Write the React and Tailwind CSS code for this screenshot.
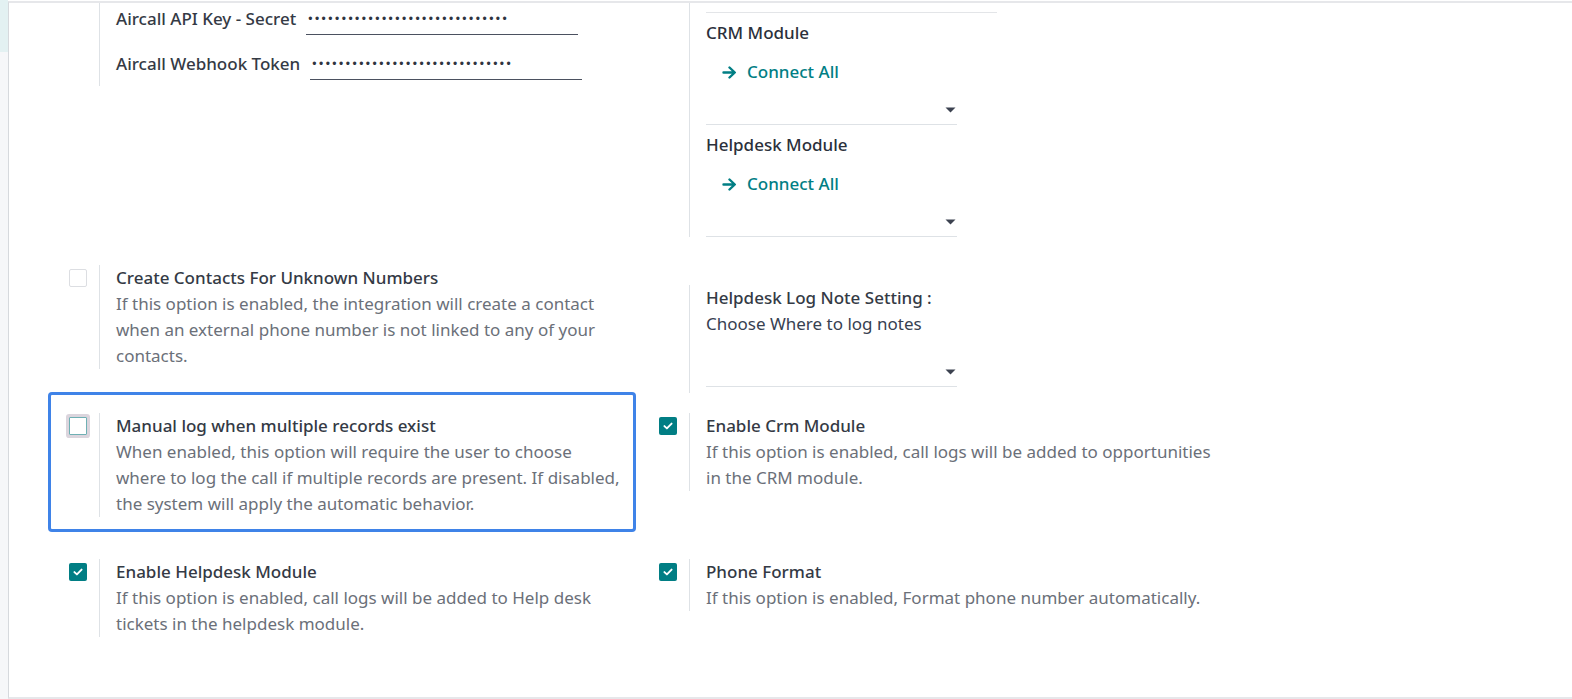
import React from "react";

function Check({ checked, focused }) {
  if (checked) {
    return (
      <div className="w-[18px] h-[18px] bg-[#017e84] rounded-[2px] flex items-center justify-center">
        <svg width="10" height="8" viewBox="0 0 10 8">
          <path d="M1.4 4.1 L3.9 6.4 L8.6 1.6" stroke="white" strokeWidth="1.9" fill="none" strokeLinecap="round" strokeLinejoin="round" />
        </svg>
      </div>
    );
  }
  if (focused) {
    return (
      <div className="w-[18px] h-[18px] bg-white border border-[#6fb0b4] rounded-[1px] shadow-[0_0_0_3px_#dbd5dd]" />
    );
  }
  return <div className="w-[18px] h-[18px] bg-white border border-[#dcdee2] rounded-[2px]" />;
}

function Setting({ checkbox, children }) {
  return (
    <div className="flex">
      <div className="w-[51px] shrink-0 pl-[21px] pt-[4px]">{checkbox}</div>
      <div className="border-l border-[#dee2e6] pl-4 min-w-0">{children}</div>
    </div>
  );
}

function Title({ children }) {
  return <div className="font-medium text-[#343a45] leading-[26px] whitespace-nowrap">{children}</div>;
}

function Desc({ lines }) {
  return (
    <div className="text-[#6b7079] leading-[26px]">
      {lines.map((l, i) => (
        <div key={i} className="whitespace-nowrap">{l}</div>
      ))}
    </div>
  );
}

function Caret() {
  return (
    <svg width="11" height="6" viewBox="0 0 11 6">
      <path d="M0.5 0.5 L10.5 0.5 L5.5 5.5 Z" fill="#3c4250" />
    </svg>
  );
}

function Arrow() {
  return (
    <svg width="15" height="13" viewBox="0 0 15 13">
      <path d="M1.5 6.5 H12.5 M7.5 1.5 L12.8 6.5 L7.5 11.5" stroke="#017e84" strokeWidth="2.4" fill="none" strokeLinecap="round" strokeLinejoin="round" />
    </svg>
  );
}

function Field({ label, className }) {
  const dots = "••••••••••••••••••••••••••••••";
  return (
    <div className={"flex items-center " + (className || "")}>
      <div className="h-[32px] flex items-center font-medium text-[#343a45] whitespace-nowrap">{label}</div>
      <div className="ml-[10px] w-[272px] h-[32px] border-b border-[#4b5160] flex items-center pl-[2px]">
        <span className="font-['Liberation_Sans',sans-serif] text-[12px] tracking-[2.5px] text-[#2f3440] leading-none">{dots}</span>
      </div>
    </div>
  );
}

function ModuleBlock({ title }) {
  return (
    <div>
      <div className="mt-[8px] leading-[24px] font-medium text-[#2b303b]">{title}</div>
      <div className="mt-[15px] h-[24px] pl-[16px] flex items-center gap-[10px] text-[#017e84] font-medium">
        <Arrow />
        <span>Connect All</span>
      </div>
      <div className="mt-[11px] h-[30px] w-[251px] border-b border-[#dee2e6] flex items-center justify-end pr-[1px]">
        <Caret />
      </div>
    </div>
  );
}

export default function App() {
  return (
    <div className="w-[1572px] h-[699px] flex bg-white font-['Noto_Sans',sans-serif] text-[17px] overflow-hidden">
      <div className="w-[8px] shrink-0 flex flex-col">
        <div className="h-[52px] bg-[#e3f1f2]" />
        <div className="flex-1 bg-[#f6f7f9]" />
      </div>
      <div className="flex-1 mt-[1px] border-t-2 border-b-2 border-l border-t-[#e6e7ea] border-b-[#e6e7ea] border-l-[#d6d9dd] pl-[39px]">
        {/* Row 1 */}
        <div className="grid grid-cols-[590px_588px] items-start">
          <Setting checkbox={null}>
            <div className="pb-[6px]">
              <Field label="Aircall API Key - Secret" />
              <Field label="Aircall Webhook Token" className="mt-[13px]" />
            </div>
          </Setting>
          <Setting checkbox={null}>
            <div className="pt-[9px]">
              <div className="w-[291px] border-t border-[#e3e5e8]" />
              <ModuleBlock title="CRM Module" />
              <ModuleBlock title="Helpdesk Module" />
            </div>
          </Setting>
        </div>

        {/* Row 2 */}
        <div className="grid grid-cols-[590px_588px] items-start">
          <div className="mt-[28px]">
            <Setting checkbox={<Check />}>
              <Title>Create Contacts For Unknown Numbers</Title>
              <Desc
                lines={[
                  "If this option is enabled, the integration will create a contact",
                  "when an external phone number is not linked to any of your",
                  "contacts.",
                ]}
              />
            </Setting>
          </div>
          <div className="mt-[48px]">
            <Setting checkbox={null}>
              <div className="pb-[6px]">
                <Title>Helpdesk Log Note Setting :</Title>
                <div className="leading-[26px] text-[#374151]">Choose Where to log notes</div>
                <div className="mt-[21px] h-[29px] w-[251px] border-b border-[#dee2e6] flex items-center justify-end pr-[1px]">
                  <Caret />
                </div>
              </div>
            </Setting>
          </div>
        </div>

        {/* Row 3 */}
        <div className="grid grid-cols-[590px_588px] items-start -mt-[1px]">
          <div className="w-[588px] pt-[21px] pb-[15px] rounded-[4px] shadow-[inset_0_0_0_3px_#3f83e8]">
            <Setting checkbox={<Check focused />}>
              <Title>Manual log when multiple records exist</Title>
              <Desc
                lines={[
                  "When enabled, this option will require the user to choose",
                  "where to log the call if multiple records are present. If disabled,",
                  "the system will apply the automatic behavior.",
                ]}
              />
            </Setting>
          </div>
          <div className="pt-[21px] pb-[12px]">
            <Setting checkbox={<Check checked />}>
              <Title>Enable Crm Module</Title>
              <Desc
                lines={[
                  "If this option is enabled, call logs will be added to opportunities",
                  "in the CRM module.",
                ]}
              />
            </Setting>
          </div>
        </div>

        {/* Row 4 */}
        <div className="grid grid-cols-[590px_588px] items-start mt-[27px]">
          <Setting checkbox={<Check checked />}>
            <Title>Enable Helpdesk Module</Title>
            <Desc
              lines={[
                "If this option is enabled, call logs will be added to Help desk",
                "tickets in the helpdesk module.",
              ]}
            />
          </Setting>
          <Setting checkbox={<Check checked />}>
            <Title>Phone Format</Title>
            <Desc lines={["If this option is enabled, Format phone number automatically."]} />
          </Setting>
        </div>
      </div>
    </div>
  );
}
